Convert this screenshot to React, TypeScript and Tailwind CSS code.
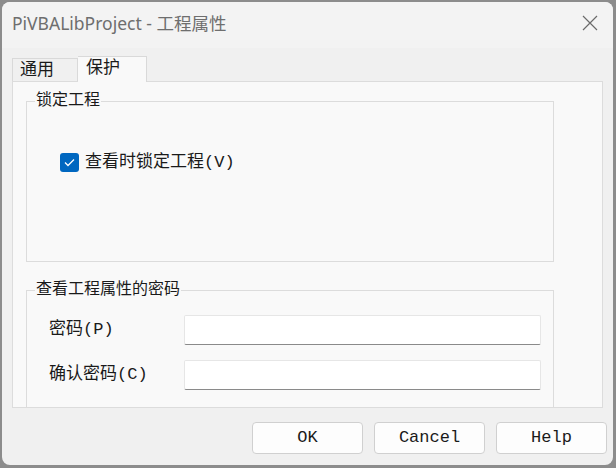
export default function App() {
  const mono = "font-['Liberation_Mono','Noto_Sans_CJK_SC',monospace]";
  return (
    <div className="w-[616px] h-[468px] bg-[#8c8c8c] pt-[2px] pl-[2px] pr-[3px] pb-[3px]">
      <div className="h-full rounded-lg bg-[#f0f0f0] flex flex-col overflow-hidden">
        {/* Title bar */}
        <div className="h-[46px] shrink-0 flex items-center justify-between pl-[10px] pr-[15px] bg-[#f3f3f3]">
          <span className="text-[17.5px] text-[#6e6e6e] font-['Noto_Sans','Noto_Sans_CJK_SC',sans-serif] -mt-[4px]">
            PiVBALibProject - 工程属性
          </span>
          <svg width="16" height="16" viewBox="0 0 16 16" className="-mt-[4px]">
            <path d="M1 1L15 15M15 1L1 15" stroke="#6a6a6a" strokeWidth="1.2" />
          </svg>
        </div>

        {/* Tabs */}
        <div className={`flex items-end pl-[10px] h-[33px] shrink-0 text-[17px] text-[#1a1a1a] ${mono}`}>
          <div className="h-[23px] w-[66px] border border-b-0 border-[#d9d9d9] bg-[#f0f0f0] pl-[7px] leading-[24px]">
            通用
          </div>
          <div className="h-[26px] w-[69px] border border-b-0 border-l-0 border-[#d9d9d9] bg-[#f9f9f9] pl-[8px] leading-[24px] -mb-px relative">
            保护
          </div>
        </div>

        {/* Panel */}
        <div className={`mx-[10px] h-[327px] shrink-0 border border-[#dcdcdc] bg-[#f9f9f9] pl-[13px] pr-[48px] overflow-hidden text-[#1a1a1a] ${mono}`}>
          <fieldset className="border border-[#dcdcdc] h-[171px] px-[8px] mt-[9px]">
            <legend className="px-[1px] text-[16px] leading-[20px]">锁定工程</legend>
            <label className="flex items-center gap-[6px] mt-[39px] ml-[25px] text-[17px]">
              <span className="w-[19px] h-[19px] rounded-[3px] bg-[#0067c0] flex items-center justify-center">
                <svg width="11" height="9" viewBox="0 0 11 9">
                  <path d="M1 4.5L4 7.5L10 1.5" stroke="#fff" strokeWidth="1.3" fill="none" />
                </svg>
              </span>
              查看时锁定工程(V)
            </label>
          </fieldset>

          <fieldset className="border border-[#dcdcdc] h-[160px] px-[8px] mt-[18px]">
            <legend className="px-[1px] text-[16px] leading-[20px]">查看工程属性的密码</legend>
            <div className="flex flex-col gap-[15px] mt-[15px] pl-[14px] pr-[4px]">
              <div className="flex items-center justify-between text-[17px]">
                <span>密码(P)</span>
                <div className="w-[357px] h-[30px] bg-white border border-[#e6e6e6] border-b-[#8a8a8a] rounded-[2px]" />
              </div>
              <div className="flex items-center justify-between text-[17px]">
                <span>确认密码(C)</span>
                <div className="w-[357px] h-[30px] bg-white border border-[#e6e6e6] border-b-[#8a8a8a] rounded-[2px]" />
              </div>
            </div>
          </fieldset>
        </div>

        {/* Buttons */}
        <div className={`flex justify-end gap-[11px] pr-[6px] mt-[14px] text-[17px] text-[#1a1a1a] ${mono}`}>
          {["OK", "Cancel", "Help"].map((b) => (
            <button
              key={b}
              className="w-[111px] h-[32px] rounded-[4px] border border-[#d0d0d0] bg-[#fdfdfd] flex items-center justify-center"
            >
              {b}
            </button>
          ))}
        </div>
      </div>
    </div>
  );
}
